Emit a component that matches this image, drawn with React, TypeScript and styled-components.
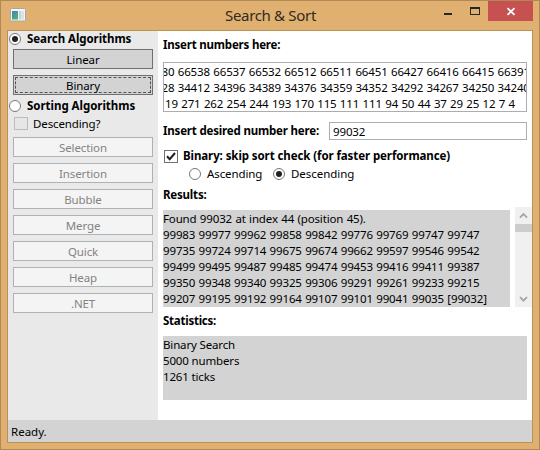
import React from "react";
import styled, { createGlobalStyle } from "styled-components";

const GlobalStyle = createGlobalStyle`
  * { box-sizing: border-box; }
  body { margin: 0; background: #dfb06f; }
  #root { font-family: "Noto Sans", "Open Sans", sans-serif; font-size: 11.5px; color: #000; }
`;

const Frame = styled.div`
  width: 540px;
  height: 450px;
  display: flex;
  flex-direction: column;
  padding: 0 6px 6px;
  background: #dfb06f;
  border: 1px solid #af8a57;
  overflow: hidden;
`;

const TitleBar = styled.header`
  height: 29px;
  flex: none;
  display: grid;
  grid-template-columns: 150px 1fr 150px;
  margin-right: -1px;
`;

const AppIcon = styled.svg`
  display: block;
  margin: 7px 0 0 3px;
`;

const Title = styled.h1`
  margin: 0;
  font-size: 15px;
  font-weight: 400;
  line-height: 29px;
  text-align: center;
  color: #322b22;
  letter-spacing: -0.32px;
  white-space: nowrap;
`;

const WindowButtons = styled.div`
  display: flex;
  justify-content: flex-end;
  padding-right: 1px;
`;

const WindowButton = styled.button<{ $width: number; $danger?: boolean }>`
  width: ${(p) => p.$width}px;
  height: 20px;
  padding: 0;
  border: 0;
  background: ${(p) => (p.$danger ? "#c75050" : "transparent")};
  svg { display: block; }
`;

const Client = styled.div`
  flex: 1;
  min-height: 0;
  display: flex;
  flex-direction: column;
  background: #fff;
  border: 1px solid #b99259;
`;

const Body = styled.div`
  flex: 1;
  min-height: 0;
  display: flex;
`;

const Sidebar = styled.aside`
  width: 150px;
  flex: none;
  background: #e9e9e9;
  padding: 1px 5px 0 1px;
`;

const Main = styled.main`
  flex: 1;
  min-width: 0;
  padding: 6px 0 0 5px;
`;

const StatusBar = styled.footer`
  height: 22px;
  flex: none;
  padding-left: 3px;
  line-height: 23px;
  background: #d3d3d3;
`;

const OptionRow = styled.label<{ $height: number; $indent?: number; $gap?: number }>`
  display: flex;
  align-items: center;
  height: ${(p) => p.$height}px;
  padding-left: ${(p) => p.$indent ?? 0}px;
  gap: ${(p) => p.$gap ?? 6}px;
  white-space: nowrap;
  svg { flex: none; }
`;

const Text = styled.span<{ $bold?: boolean; $track?: number }>`
  font-weight: ${(p) => (p.$bold ? 700 : 400)};
  letter-spacing: ${(p) => p.$track ?? 0}px;
  line-height: 16px;
  white-space: nowrap;
`;

const ButtonStack = styled.div<{ $top: number; $bottom?: number }>`
  display: flex;
  flex-direction: column;
  gap: 6px;
  padding: ${(p) => p.$top}px 0 ${(p) => p.$bottom ?? 0}px 4px;
`;

const ActionButton = styled.button<{ $focused?: boolean }>`
  height: 20px;
  padding: 1px;
  font: inherit;
  line-height: 16px;
  letter-spacing: -0.12px;
  color: #000;
  background: #d3d3d3;
  border: 1px solid #707070;
  &:disabled { color: #838383; background: #f4f4f4; border-color: #adb2b5; }
  span {
    display: block;
    height: 16px;
    line-height: ${(p) => (p.$focused ? 16 : 17)}px;
    border: ${(p) => (p.$focused ? "1px dashed #555" : "0")};
  }
`;

const Heading = styled.div<{ $height: number; $top?: number }>`
  height: ${(p) => p.$height}px;
  padding-top: ${(p) => p.$top ?? 0}px;
  display: flex;
  align-items: flex-start;
`;

const NumbersBox = styled.div`
  width: 364px;
  height: 50px;
  padding-top: 1px;
  border: 1px solid #abadb3;
  line-height: 16px;
  overflow: hidden;
  white-space: pre;
`;

const NumbersLine = styled.div<{ $shift: number }>`
  margin-left: ${(p) => p.$shift}px;
  letter-spacing: -0.14px;
  word-spacing: 0.5px;
`;

const DesiredRow = styled.div`
  width: 364px;
  display: flex;
  align-items: center;
  justify-content: space-between;
  margin: 10px 0 7px;
`;

const DesiredInput = styled.input`
  width: 198px;
  height: 18px;
  padding: 1px 2px 0 3px;
  border: 1px solid #abadb3;
  outline: 0;
  font: inherit;
  letter-spacing: -0.14px;
  background: #fff;
`;

const OrderOptions = styled.div`
  display: grid;
  grid-template-columns: 84px 1fr;
  padding-left: 26px;
`;

const ResultsRow = styled.div`
  display: flex;
  justify-content: space-between;
  align-items: flex-end;
  height: 100px;
  margin-bottom: 6px;
`;

const Output = styled.div<{ $width: number; $height: number; $track: number; $word?: number }>`
  width: ${(p) => p.$width}px;
  height: ${(p) => p.$height}px;
  padding-top: 1px;
  line-height: 16px;
  white-space: pre;
  letter-spacing: ${(p) => p.$track}px;
  word-spacing: ${(p) => p.$word ?? 0}px;
  background: #d3d3d3;
  overflow: hidden;
`;

const ScrollBar = styled.div`
  width: 17px;
  height: 100px;
  display: flex;
  flex-direction: column;
  background: #f0f0f0;
  svg { display: block; }
`;

const ScrollThumb = styled.div`
  height: 8px;
  margin-bottom: auto;
  background: #cdcdcd;
`;

const Radio = ({ checked }: { checked?: boolean }) => (
  <svg width="12" height="12" viewBox="0 0 12 12">
    <circle cx="6" cy="6" r="5.5" fill="#fff" stroke="#777" />
    {checked && <circle cx="6" cy="6" r="3" fill="#212121" />}
  </svg>
);

const CheckBox = ({ checked, disabled }: { checked?: boolean; disabled?: boolean }) => (
  <svg width="14" height="13" viewBox="0 0 14 13">
    <rect x="0.5" y="0.5" width="13" height="12" fill={disabled ? "#e6e6e6" : "#fff"} stroke={disabled ? "#bcbcbc" : "#707070"} />
    {checked && <path d="M3 6.3 5.7 9.2 11 3" fill="none" stroke="#212121" strokeWidth="2" />}
  </svg>
);

const ScrollArrow = ({ down }: { down?: boolean }) => (
  <svg width="17" height="17" viewBox="0 0 17 17">
    <path d={down ? "M5 7 8.5 10.7 12 7" : "M5 10.7 8.5 7 12 10.7"} fill="none" stroke="#a3a3a3" strokeWidth="1.8" />
  </svg>
);

const sortButtons = ["Selection", "Insertion", "Bubble", "Merge", "Quick", "Heap", ".NET"];

const numberLines = [
  { shift: -2.5, text: "80 66538 66537 66532 66512 66511 66451 66427 66416 66415 66391" },
  { shift: -2.5, text: "28 34412 34396 34389 34376 34359 34352 34292 34267 34250 34240" },
  { shift: 1, text: "19 271 262 254 244 193 170 115 111 111 94 50 44 37 29 25 12 7 4" },
];

const results = `Found 99032 at index 44 (position 45).
99983 99977 99962 99858 99842 99776 99769 99747 99747
99735 99724 99714 99675 99674 99662 99597 99546 99542
99499 99495 99487 99485 99474 99453 99416 99411 99387
99350 99348 99340 99325 99306 99291 99261 99233 99215
99207 99195 99192 99164 99107 99101 99041 99035 [99032]`;

export default function App() {
  return (
    <>
      <GlobalStyle />
      <Frame>
        <TitleBar>
          <AppIcon width="16" height="14" viewBox="0 0 16 14">
            <defs>
              <linearGradient id="pane" x1="0" y1="0" x2="0.6" y2="1">
                <stop offset="0" stopColor="#4a7fae" />
                <stop offset="1" stopColor="#4fae7c" />
              </linearGradient>
            </defs>
            <rect x="0.5" y="0.5" width="15" height="12.5" rx="0.8" fill="#f4f6f5" stroke="#a9a7a0" />
            <rect x="2" y="3" width="6" height="8.5" fill="url(#pane)" />
            <rect x="9" y="3" width="2.5" height="8.5" fill="#c4d5d6" />
            <rect x="12.3" y="3" width="1.7" height="8.5" fill="#d8e0df" />
          </AppIcon>
          <Title>Search &amp; Sort</Title>
          <WindowButtons>
            <WindowButton $width={27} aria-label="Minimize">
              <svg width="27" height="20"><rect x="9" y="12" width="8" height="2" fill="#262626" /></svg>
            </WindowButton>
            <WindowButton $width={26} aria-label="Maximize">
              <svg width="26" height="20"><path fillRule="evenodd" fill="#262626" d="M8 6h10v8H8zM9 8v5h8V8z" /></svg>
            </WindowButton>
            <WindowButton $width={45} $danger aria-label="Close">
              <svg width="45" height="20"><path d="M19.5 7.2l7 6.6M26.5 7.2l-7 6.6" stroke="#fff" strokeWidth="1.8" /></svg>
            </WindowButton>
          </WindowButtons>
        </TitleBar>
        <Client>
          <Body>
            <Sidebar>
              <OptionRow $height={13}><Radio checked /><Text $bold $track={-0.06}>Search Algorithms</Text></OptionRow>
              <ButtonStack $top={4} $bottom={4}>
                <ActionButton><span>Linear</span></ActionButton>
                <ActionButton $focused><span>Binary</span></ActionButton>
              </ButtonStack>
              <OptionRow $height={13}><Radio /><Text $bold $track={-0.03}>Sorting Algorithms</Text></OptionRow>
              <OptionRow $height={23} $indent={5} $gap={5}><CheckBox disabled /><Text $track={-0.12}>Descending?</Text></OptionRow>
              <ButtonStack $top={2}>
                {sortButtons.map((name) => (
                  <ActionButton key={name} disabled><span>{name}</span></ActionButton>
                ))}
              </ButtonStack>
            </Sidebar>
            <Main>
              <Heading $height={25}><Text $bold $track={-0.2}>Insert numbers here:</Text></Heading>
              <NumbersBox>
                {numberLines.map((l) => (
                  <NumbersLine key={l.text} $shift={l.shift}>{l.text}</NumbersLine>
                ))}
              </NumbersBox>
              <DesiredRow>
                <Text $bold $track={-0.18}>Insert desired number here:</Text>
                <DesiredInput defaultValue="99032" />
              </DesiredRow>
              <OptionRow $height={18} $indent={1} $gap={5}>
                <CheckBox checked />
                <Text $bold $track={-0.09}>Binary: skip sort check (for faster performance)</Text>
              </OptionRow>
              <OrderOptions>
                <OptionRow $height={17}><Radio /><Text $track={-0.1}>Ascending</Text></OptionRow>
                <OptionRow $height={17}><Radio checked /><Text $track={-0.05}>Descending</Text></OptionRow>
              </OrderOptions>
              <Heading $height={25} $top={5}><Text $bold $track={-0.2}>Results:</Text></Heading>
              <ResultsRow>
                <Output $width={347} $height={97} $track={-0.14} $word={0.5}>{results}</Output>
                <ScrollBar>
                  <ScrollArrow />
                  <ScrollThumb />
                  <ScrollArrow down />
                </ScrollBar>
              </ResultsRow>
              <Heading $height={23}><Text $bold $track={-0.25}>Statistics:</Text></Heading>
              <Output $width={364} $height={64} $track={-0.15}>{"Binary Search\n5000 numbers\n1261 ticks"}</Output>
            </Main>
          </Body>
          <StatusBar>Ready.</StatusBar>
        </Client>
      </Frame>
    </>
  );
}
